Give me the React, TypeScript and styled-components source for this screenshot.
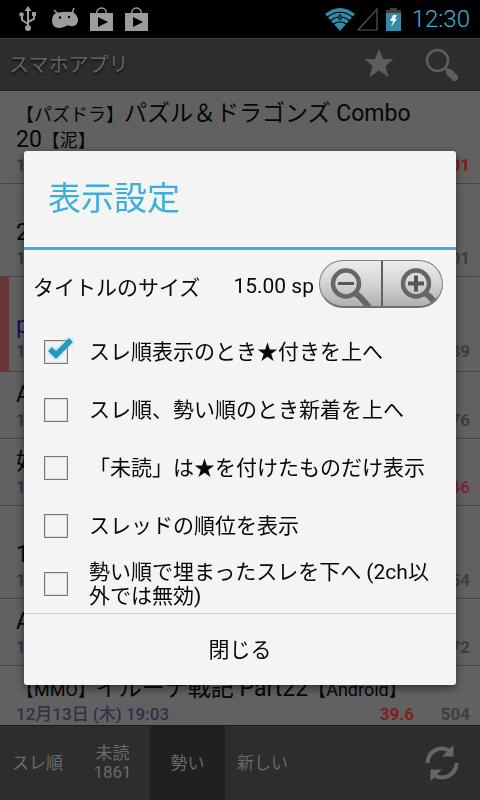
import React from "react";
import styled, { createGlobalStyle } from "styled-components";

const GlobalStyle = createGlobalStyle`
  * { box-sizing: border-box; }
  body {
    margin: 0;
    background: #000;
    font-family: Roboto, "Noto Sans CJK JP", sans-serif;
  }
  button { font-family: inherit; border: 0; padding: 0; background: none; cursor: pointer; }
`;

const Screen = styled.div`
  height: 100vh;
  display: flex;
  flex-direction: column;
  overflow: hidden;
`;

const StatusBar = styled.header`
  flex: none;
  height: 38px;
  padding: 0 10px 0 16px;
  display: flex;
  align-items: center;
  justify-content: space-between;
  background: #000;
`;

const StatusGroup = styled.div<{ $gap: number }>`
  display: flex;
  align-items: center;
  gap: ${(p) => p.$gap}px;
  svg { display: block; }
`;

const BatterySlot = styled.span`
  margin-left: 6px;
`;

const Clock = styled.time`
  margin-left: 9px;
  font-size: 24px;
  font-weight: 300;
  line-height: 38px;
  color: #46aed6;
`;

const AppBar = styled.div`
  flex: none;
  height: 53px;
  padding: 0 21px 0 9px;
  display: flex;
  align-items: center;
  justify-content: space-between;
  background: #2d2d2d;
  border-top: 1px solid #393939;
  border-bottom: 1px solid #1f1a1c;
`;

const AppTitle = styled.h1`
  margin: 0;
  font-size: 20px;
  font-weight: 400;
  line-height: 28px;
  color: #626262;
  text-shadow: 0 2px 2px #111;
`;

const AppActions = styled.div`
  display: flex;
  gap: 31px;
`;

const IconButton = styled.button`
  display: flex;
  svg { display: block; }
`;

const ThreadList = styled.ul`
  flex: 1;
  min-height: 0;
  overflow: hidden;
  margin: 0;
  padding: 0;
  list-style: none;
  background: #616161;
`;

const ThreadItem = styled.li<{ $flagged?: boolean }>`
  min-height: ${(p) => (p.$flagged ? 95 : 67)}px;
  padding: 10px 10px 8px ${(p) => (p.$flagged ? 7 : 16)}px;
  border-bottom: 1px solid #464646;
  box-shadow: ${(p) => (p.$flagged ? "none" : "inset 0 1px #666")};
  ${(p) => p.$flagged && "border-image: linear-gradient(90deg, #6b3434 9px, #464646 9px) 1; border-left: 9px solid #6b3434;"}
`;

const ThreadTitle = styled.div<{ $unread?: boolean }>`
  font-size: 23px;
  line-height: 26px;
  white-space: pre;
  color: ${(p) => (p.$unread ? "#101060" : "#060606")};
`;

const Tag = styled.span`
  font-size: 18px;
  line-height: 18px;
`;

const ThreadMeta = styled.div`
  margin-top: 2px;
  display: grid;
  grid-template-columns: 1fr auto 56px;
  font-size: 17px;
  font-weight: 700;
  line-height: 20px;
  text-align: right;
`;

const Posted = styled.span`
  text-align: left;
  font-weight: 500;
  color: #30304c;
`;

const Speed = styled.span`
  color: #7c2222;
`;

const Count = styled.span<{ $tone?: string }>`
  color: ${(p) => p.$tone || "#3e3e3e"};
`;

const TabBar = styled.nav`
  flex: none;
  height: 75px;
  display: flex;
  background: #2d2d2d;
  border-top: 1px solid #1c1c1c;
`;

const Tab = styled.button<{ $active?: boolean }>`
  width: 75px;
  font-size: 17px;
  line-height: 19px;
  white-space: pre-line;
  color: #6a6a6a;
  background: ${(p) => (p.$active ? "#202020" : "transparent")};
`;

const RefreshButton = styled(IconButton)`
  align-items: center;
  margin-left: auto;
  padding-right: 21px;
`;

const Overlay = styled.div`
  position: fixed;
  inset: 0;
  padding: 36px 24px 0;
  display: flex;
  align-items: center;
`;

const Dialog = styled.section`
  width: 100%;
  background: #f4f4f4;
  border-radius: 3px;
  color: #080808;
  font-size: 21px;
  box-shadow: 0 3px 8px rgba(0, 0, 0, 0.5);
`;

const DialogTitle = styled.h2`
  margin: 0;
  padding: 0 24px;
  font-size: 33px;
  font-weight: 400;
  line-height: 96px;
  color: #3eafd8;
  border-bottom: 3px solid #3eafd8;
`;

const SizeRow = styled.div`
  height: 67px;
  margin-bottom: 6px;
  padding: 0 13px 0 9px;
  display: flex;
  align-items: center;
`;

const SizeLabel = styled.span`
  padding-top: 4px;
`;

const SizeValue = styled.output`
  margin-left: auto;
  margin-right: 5px;
  padding-top: 4px;
`;

const ZoomControl = styled.div`
  display: flex;
  height: 48px;
  border: 1px solid #808080;
  border-bottom: 2px solid #707070;
  border-radius: 24px;
  overflow: hidden;
  background: linear-gradient(#ececec, #d4d4d4 50%, #b0b0b0);
`;

const ZoomButton = styled.button`
  width: 61px;
  height: 45px;
  & + & { border-left: 2px solid #606060; }
  svg { display: block; }
`;

const Option = styled.label`
  height: 58px;
  padding: 0 20px;
  display: flex;
  align-items: center;
  gap: 21px;
  line-height: 24px;
  cursor: pointer;
`;

const CheckWrap = styled.span`
  position: relative;
  flex: none;
  width: 24px;
  height: 24px;
`;

const CheckInput = styled.input`
  appearance: none;
  display: block;
  width: 24px;
  height: 24px;
  margin: 0;
  border: 1px solid #777;
  box-shadow: inset 0 0 0 1px #ddd;
  & + svg { display: none; }
  &:checked + svg { display: block; }
`;

const CheckMark = styled.svg`
  position: absolute;
  left: 2px;
  top: -4px;
  pointer-events: none;
  filter: drop-shadow(0 0 2px #8fd8f0);
`;

const CloseButton = styled.button`
  display: block;
  width: 100%;
  height: 72px;
  padding-bottom: 3px;
  border-top: 1px solid #d2d2d2;
  font-size: 21px;
  color: #080808;
`;

const UsbIcon = () => (
  <svg width="24" height="26" viewBox="0 0 24 26" fill="none" stroke="#9c9c9c" strokeWidth="2">
    <path d="M12 22V4M12 18l-6-4v-4M12 16l6-3V9" />
    <path d="M12 0l3.500 5h-7zM16 6h4v4h-4z" fill="#9c9c9c" stroke="none" />
    <circle cx="5.500" cy="8.500" r="2.300" fill="#9c9c9c" stroke="none" />
    <circle cx="12" cy="22" r="3" fill="#9c9c9c" stroke="none" />
  </svg>
);

const DroidIcon = () => (
  <svg width="26" height="22" viewBox="0 0 26 22">
    <path d="M2 2l4 4M22 0l-2 5" stroke="#9c9c9c" strokeWidth="1.500" />
    <path d="M4 5q9-2 17-1c3 2 5 5 5 8 0 5-4 7-8 6-2-1-4 0-6 1-5 2-9 1-11-2C-1 13 0 7 4 5z" fill="#9c9c9c" />
    <circle cx="8" cy="9.500" r="1.200" />
    <circle cx="17" cy="9" r="1.200" />
  </svg>
);

const BagIcon = () => (
  <svg width="23" height="25" viewBox="0 0 23 25">
    <path d="M6.500 7C6.500-1 16.500-1 16.500 7" fill="none" stroke="#9c9c9c" strokeWidth="1.500" />
    <path d="M0 6h23v18H0z" fill="#9c9c9c" />
    <path d="M8 10l10 5L8 20z" fill="#000" />
  </svg>
);

const WifiIcon = () => (
  <svg width="30" height="23" viewBox="0 0 30 23">
    <path d="M0 6Q15-6 30 6L15 23z" fill="#3789a8" />
    <path d="M2 9.500Q15-1 28 9.500M5 13Q15 5 25 13M8 16.500Q15 11 22 16.500" fill="none" stroke="#000" strokeWidth="1.200" />
    <path d="M12 9l3-4 3 4h-1v3h-4V9z" fill="#15414f" />
  </svg>
);

const SignalIcon = () => (
  <svg width="21" height="24" viewBox="0 0 21 24">
    <path d="M20 2v21H1z" fill="none" stroke="#555" strokeWidth="1.200" />
  </svg>
);

const BatteryIcon = () => (
  <svg width="15" height="23" viewBox="0 0 15 23">
    <path d="M4 0h7v2h4v4H0V2h4z" fill="#424242" />
    <path d="M0 5h15v18H0z" fill="#3789a8" />
    <path d="M7 7h4l-2 4h2l-6 8 2-6H4z" fill="#e6f6fc" />
  </svg>
);

const StarIcon = () => (
  <svg width="30" height="30" viewBox="0 0 30 30">
    <path d="M15 1l4 10h10.500l-8 7 3 11-9.500-6.500L5.500 29l3-11-8-7H11z" fill="#5d5d5d" />
  </svg>
);

const SearchIcon = () => (
  <svg width="34" height="34" viewBox="0 0 34 34" fill="none" stroke="#5d5d5d">
    <circle cx="12.500" cy="12.500" r="10.500" strokeWidth="2.500" />
    <path d="M20 20l4 4" strokeWidth="3" />
    <path d="M24.500 24.500l5 5" strokeWidth="7" strokeLinecap="round" />
  </svg>
);

const RefreshIcon = () => (
  <svg width="34" height="36" viewBox="0 0 34 36">
    <path d="M2.500 18A14.500 14.500 0 0 1 25 6M31.500 18A14.500 14.500 0 0 1 9 30" fill="none" stroke="#666" strokeWidth="4" />
    <path d="M28.500 0v11.500H17zM5.500 36V24.500H17z" fill="#666" />
  </svg>
);

const LensIcon = ({ plus }: { plus?: boolean }) => (
  <svg width={plus ? 59 : 60} height="45" viewBox={plus ? "0 0 59 45" : "0 0 60 45"} fill="none" stroke="#666">
    <g transform={plus ? "translate(7 0)" : undefined}>
      <circle cx="26" cy="22.500" r="13" strokeWidth="4.500" />
      <path d="M35 32l5 4 9 10" strokeWidth="6" />
      <path d={plus ? "M18 22.500h16M26 14.500v16" : "M18 22.500h16"} strokeWidth={plus ? 4 : 3} stroke="#555" />
    </g>
  </svg>
);

type Thread = {
  title: React.ReactNode;
  date: string;
  speed?: string;
  count: string;
  tone?: string;
  flagged?: boolean;
};

const DATE = "12月13日 (木) 19:03";

const threads: Thread[] = [
  { title: <><Tag>【パズドラ】</Tag>パズル＆ドラゴンズ Combo{"\n"}20<Tag>【泥】</Tag></>, date: DATE, count: "1001", tone: "#821818" },
  { title: "\u00a0\n2", date: DATE, count: "101" },
  { title: "\u00a0\np", date: DATE, count: "89", flagged: true },
  { title: "A", date: DATE, count: "76" },
  { title: "好", date: DATE, count: "46", tone: "#7a2832" },
  { title: "\u00a0\n1", date: DATE, count: "54" },
  { title: "A", date: DATE, count: "72" },
  { title: <><Tag>【MMO】</Tag>イルーナ戦記 Part22<Tag>【Android】</Tag></>, date: DATE, speed: "39.6", count: "504" },
];

const options = [
  "スレ順表示のとき★付きを上へ",
  "スレ順、勢い順のとき新着を上へ",
  "「未読」は★を付けたものだけ表示",
  "スレッドの順位を表示",
  "勢い順で埋まったスレを下へ (2ch以外では無効)",
];

const tabs = ["スレ順", "未読\n1861", "勢い", "新しい"];

export default function App() {
  return (
    <>
      <GlobalStyle />
      <Screen>
        <StatusBar>
          <StatusGroup $gap={12}>
            <UsbIcon />
            <DroidIcon />
            <BagIcon />
            <BagIcon />
          </StatusGroup>
          <StatusGroup $gap={2}>
            <WifiIcon />
            <SignalIcon />
            <BatterySlot><BatteryIcon /></BatterySlot>
            <Clock>12:30</Clock>
          </StatusGroup>
        </StatusBar>
        <AppBar>
          <AppTitle>スマホアプリ</AppTitle>
          <AppActions>
            <IconButton aria-label="お気に入り"><StarIcon /></IconButton>
            <IconButton aria-label="検索"><SearchIcon /></IconButton>
          </AppActions>
        </AppBar>
        <ThreadList>
          {threads.map((t, i) => (
            <ThreadItem key={i} $flagged={t.flagged}>
              <ThreadTitle $unread={t.flagged}>{t.title}</ThreadTitle>
              <ThreadMeta>
                <Posted>{t.date}</Posted>
                <Speed>{t.speed}</Speed>
                <Count $tone={t.tone}>{t.count}</Count>
              </ThreadMeta>
            </ThreadItem>
          ))}
        </ThreadList>
        <TabBar>
          {tabs.map((t) => (
            <Tab key={t} $active={t === "勢い"}>{t}</Tab>
          ))}
          <RefreshButton aria-label="更新"><RefreshIcon /></RefreshButton>
        </TabBar>
      </Screen>
      <Overlay>
        <Dialog role="dialog" aria-labelledby="dialog-title">
          <DialogTitle id="dialog-title">表示設定</DialogTitle>
          <SizeRow>
            <SizeLabel>タイトルのサイズ</SizeLabel>
            <SizeValue>15.00 sp</SizeValue>
            <ZoomControl>
              <ZoomButton aria-label="縮小"><LensIcon /></ZoomButton>
              <ZoomButton aria-label="拡大"><LensIcon plus /></ZoomButton>
            </ZoomControl>
          </SizeRow>
          {options.map((label, i) => (
            <Option key={label}>
              <CheckWrap>
                <CheckInput type="checkbox" defaultChecked={i === 0} />
                <CheckMark width="30" height="26" viewBox="0 0 30 26">
                  <path d="M4 13l6 6L25 4" fill="none" stroke="#2497bd" strokeWidth="5.500" />
                </CheckMark>
              </CheckWrap>
              <span>{label}</span>
            </Option>
          ))}
          <CloseButton>閉じる</CloseButton>
        </Dialog>
      </Overlay>
    </>
  );
}
